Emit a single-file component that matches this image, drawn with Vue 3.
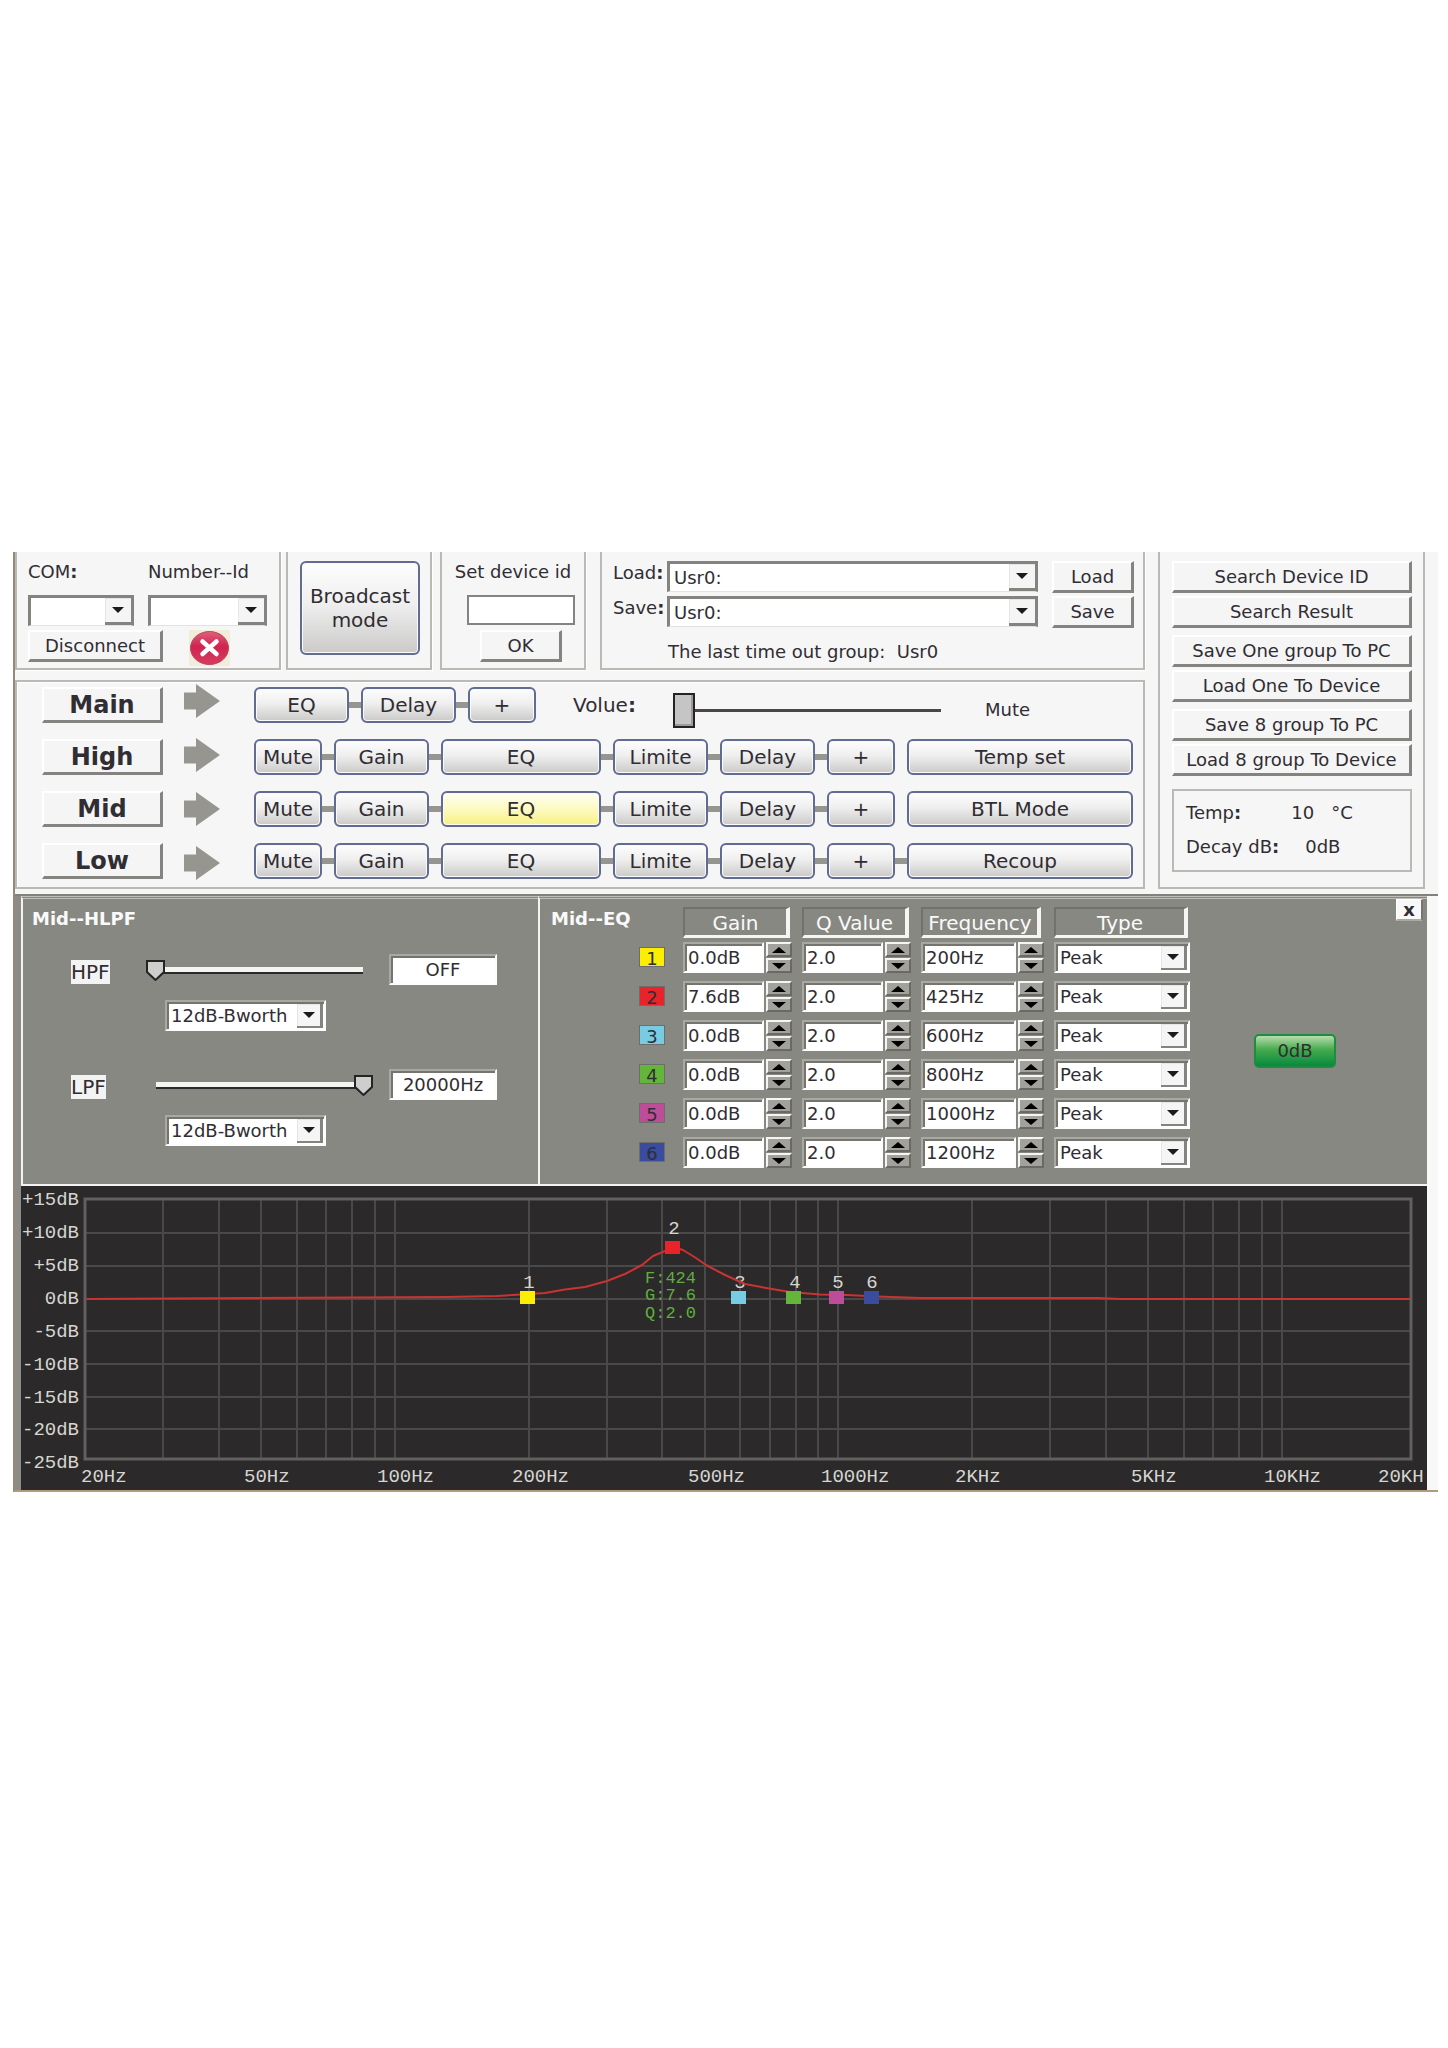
<script setup>
import { ref } from 'vue'

const channels = [
  { name: 'High', last: 'Temp set', linked: false, active: false },
  { name: 'Mid', last: 'BTL Mode', linked: false, active: true },
  { name: 'Low', last: 'Recoup', linked: true, active: false },
]
const names = ['Main', 'High', 'Mid', 'Low']

const actions = [
  ['Search Device ID', 'Search Result'],
  ['Save One group To PC', 'Load One To Device'],
  ['Save 8 group To PC', 'Load 8 group To Device'],
]

const volume = ref(0)
const filters = ref([
  { id: 'hpf', name: 'HPF', pos: 0, value: 'OFF' },
  { id: 'lpf', name: 'LPF', pos: 100, value: '20000Hz' },
])

const bands = ref([
  { n: 1, color: '#fbee00', gain: '0.0dB', q: '2.0', freq: '200Hz', x: 499, y: 105, tx: 508, ty: 102 },
  { n: 2, color: '#e8242a', gain: '7.6dB', q: '2.0', freq: '425Hz', x: 644, y: 55, tx: 653, ty: 48 },
  { n: 3, color: '#77cbe2', gain: '0.0dB', q: '2.0', freq: '600Hz', x: 710, y: 105, tx: 719, ty: 102 },
  { n: 4, color: '#63b63a', gain: '0.0dB', q: '2.0', freq: '800Hz', x: 765, y: 105, tx: 774, ty: 102 },
  { n: 5, color: '#bd4d99', gain: '0.0dB', q: '2.0', freq: '1000Hz', x: 808, y: 105, tx: 817, ty: 102 },
  { n: 6, color: '#394c9f', gain: '0.0dB', q: '2.0', freq: '1200Hz', x: 843, y: 105, tx: 851, ty: 102 },
])
const fields = [
  { key: 'gain', label: 'Gain' },
  { key: 'q', label: 'Q value' },
  { key: 'freq', label: 'Frequency' },
]

// Logarithmic frequency axis, 20 Hz to 20 kHz
const fx = (f) => Math.round(64 + 443.5 * Math.log10(f / 20))
const gridX = []
for (const d of [10, 100, 1000]) {
  for (let i = 1; i < 10; i++) if (d * i > 20) gridX.push(fx(d * i))
}
gridX.push(fx(10000))
const gridY = [47, 80, 113, 145, 178, 211, 243]
const dbLabels = [
  { t: '+15dB', y: 19 },
  { t: '+10dB', y: 52 },
  { t: '+5dB', y: 85 },
  { t: '0dB', y: 118 },
  { t: '-5dB', y: 151 },
  { t: '-10dB', y: 184 },
  { t: '-15dB', y: 217 },
  { t: '-20dB', y: 249 },
  { t: '-25dB', y: 282 },
]
const hzLabels = [
  { t: '20Hz', x: 60 },
  { t: '50Hz', x: 223 },
  { t: '100Hz', x: 356 },
  { t: '200Hz', x: 491 },
  { t: '500Hz', x: 667 },
  { t: '1000Hz', x: 800 },
  { t: '2KHz', x: 934 },
  { t: '5KHz', x: 1110 },
  { t: '10KHz', x: 1243 },
  { t: '20KH', x: 1357 },
]
</script>

<template>
  <main class="page">
    <div class="app">
      <header class="top">
        <div class="top-left">
          <div class="boxes">
            <section class="box com">
              <label for="com">COM<b>:</b></label>
              <label for="num">Number--Id</label>
              <div class="combo com-combo"><select id="com"><option></option></select><i></i></div>
              <div class="combo"><select id="num"><option></option></select><i></i></div>
              <button class="raised">Disconnect</button>
              <svg class="status" viewBox="0 0 41 36" role="img" aria-label="Disconnected">
                <defs>
                  <linearGradient id="red" x1="0" y1="0" x2="0" y2="1">
                    <stop offset="0" stop-color="#e0607c" />
                    <stop offset=".45" stop-color="#cf2450" />
                    <stop offset="1" stop-color="#d63c60" />
                  </linearGradient>
                </defs>
                <rect width="41" height="36" fill="#f1edda" />
                <ellipse cx="20.500" cy="18" rx="19" ry="16.500" fill="url(#red)" stroke="#b9475c" />
                <path d="M13.500 11.500L27.500 24M27.500 11.500L13.500 24" stroke="#fff" stroke-width="4.500" stroke-linecap="round" />
              </svg>
            </section>

            <section class="box cast">
              <button class="glossy big">Broadcast mode</button>
            </section>

            <section class="box device">
              <label for="dev">Set device id</label>
              <input id="dev" type="text" />
              <button class="raised">OK</button>
            </section>

            <section class="box presets">
              <label for="load">Load<b>:</b></label>
              <div class="combo"><select id="load"><option>Usr0:</option></select><i></i></div>
              <button class="raised">Load</button>
              <label for="save">Save<b>:</b></label>
              <div class="combo"><select id="save"><option>Usr0:</option></select><i></i></div>
              <button class="raised">Save</button>
              <p>The last time out group:&nbsp; Usr0</p>
            </section>
          </div>

          <section class="channels">
            <div class="names">
              <button v-for="n in names" :key="n" class="raised name">{{ n }}</button>
            </div>
            <div class="arrows">
              <svg v-for="n in names" :key="n" viewBox="0 0 36 34"><path d="M0 8.500H12V0L36 17L12 34V25.500H0Z" fill="#96958f" /></svg>
            </div>
            <div class="strips">
              <div class="strip main-strip">
                <button class="glossy w95 link">EQ</button>
                <button class="glossy w95 link">Delay</button>
                <button class="glossy w68">+</button>
                <label for="vol">Volue<b>:</b></label>
                <input id="vol" v-model="volume" class="vol" type="range" min="0" max="100" />
                <output for="vol">Mute</output>
              </div>
              <div v-for="c in channels" :key="c.name" class="strip">
                <button class="glossy w68 link">Mute</button>
                <button class="glossy w95 link">Gain</button>
                <button class="glossy w160 link" :class="{ active: c.active }">EQ</button>
                <button class="glossy w95 link">Limite</button>
                <button class="glossy w95 link">Delay</button>
                <button class="glossy w68" :class="{ link: c.linked }">+</button>
                <button class="glossy wide">{{ c.last }}</button>
              </div>
            </div>
          </section>
        </div>

        <aside class="side">
          <div v-for="(pair, i) in actions" :key="i" class="pair">
            <button v-for="a in pair" :key="a" class="raised">{{ a }}</button>
          </div>
          <dl class="readings">
            <dt>Temp<b>:</b></dt>
            <dd class="temp"><span>10</span><span>°C</span></dd>
            <dt>Decay dB<b>:</b></dt>
            <dd class="decay">0dB</dd>
          </dl>
        </aside>
      </header>

      <div class="body">
        <div class="panels">
          <section class="panel hlpf">
            <h2>Mid--HLPF</h2>
            <div v-for="f in filters" :key="f.id" class="filter">
              <div class="filter-row">
                <label :for="f.id"><span>{{ f.name }}</span></label>
                <input :id="f.id" v-model="f.pos" class="cut" type="range" min="0" max="100" />
                <input v-model="f.value" class="sunk value" type="text" :aria-label="f.name + ' frequency'" />
              </div>
              <div class="combo sunk slope">
                <select :aria-label="f.name + ' slope'"><option>12dB-Bworth</option></select><i></i>
              </div>
            </div>
          </section>

          <section class="panel eq">
            <h2>Mid--EQ</h2>
            <div class="bands">
              <div class="band head">
                <span></span><span class="th">Gain</span><span class="th">Q Value</span><span class="th fr">Frequency</span><span class="th ty">Type</span>
              </div>
              <div v-for="b in bands" :key="b.n" class="band">
                <span class="swatch" :style="{ background: b.color }">{{ b.n }}</span>
                <div v-for="f in fields" :key="f.key" class="spin">
                  <input v-model="b[f.key]" class="sunk" type="text" :aria-label="f.label + ' of band ' + b.n" />
                  <div class="steps">
                    <button :aria-label="f.label + ' up'"><svg viewBox="0 0 14 6"><path d="M0 6L7 0L14 6Z" /></svg></button>
                    <button :aria-label="f.label + ' down'"><svg viewBox="0 0 14 6"><path d="M0 0H14L7 6Z" /></svg></button>
                  </div>
                </div>
                <div class="combo sunk">
                  <select :aria-label="'Type of band ' + b.n"><option>Peak</option></select><i></i>
                </div>
              </div>
            </div>
            <button class="zero">0dB</button>
            <button class="close" aria-label="Close">x</button>
          </section>
        </div>

        <svg class="chart" viewBox="0 0 1406 304" role="img" aria-label="Frequency response">
          <rect width="1406" height="304" fill="#2b2929" />
          <g stroke="#4a4949" stroke-width="2">
            <line v-for="x in gridX" :key="'x' + x" :x1="x" :x2="x" y1="13" y2="273" />
            <line v-for="y in gridY" :key="'y' + y" x1="64" x2="1390" :y1="y" :y2="y" />
          </g>
          <rect x="64" y="13" width="1326" height="260" fill="none" stroke="#62615f" stroke-width="3" />
          <g class="axis">
            <text v-for="l in dbLabels" :key="l.t" x="58" :y="l.y" text-anchor="end">{{ l.t }}</text>
            <text v-for="l in hzLabels" :key="l.t" :x="l.x" y="296">{{ l.t }}</text>
            <text v-for="b in bands" :key="b.n" :x="b.tx" :y="b.ty" text-anchor="middle">{{ b.n }}</text>
          </g>
          <path
            d="M66 113L232 112L426 111L476 110L500 108.500L524 107L544 103.500L564 101L586 95L604 88L621 79L632 70L644 65L652 61L662 64L675 72L685 79L704 89L724 98L751 103L769 106L799 108.500L826 109L856 110.500L900 112H1077L1100 113H1389"
            fill="none" stroke="#c83431" stroke-width="2" stroke-linejoin="round"
          />
          <rect v-for="b in bands" :key="b.n" :x="b.x" :y="b.y" width="15" height="13" :fill="b.color" />
          <g class="readout">
            <text x="624" y="97">F:424</text>
            <text x="624" y="114">G:7.6</text>
            <text x="624" y="132">Q:2.0</text>
          </g>
        </svg>
      </div>
    </div>
  </main>
</template>

<style>
body {
  margin: 0;
  background: #fff;
}
</style>

<style scoped>
* {
  box-sizing: border-box;
}
.page {
  min-height: 100vh;
  display: flex;
  align-items: center;
  padding: 0 10px 4px 13px;
  font: 18px/24px "DejaVu Sans", Verdana, sans-serif;
  color: #302d33;
}
button,
input,
select,
output {
  font: inherit;
  color: inherit;
  margin: 0;
  padding: 0;
}
.app {
  flex: 1;
  min-width: 0;
  border-left: 2px solid #96897c;
  border-bottom: 2px solid #b39a7c;
}
.top {
  display: flex;
  gap: 13px;
  padding: 0 13px 5px 0;
  background: #f6f6f6;
  border-bottom: 2px solid #83817b;
}
.top-left {
  flex: 1;
  min-width: 0;
}
.boxes {
  display: flex;
  height: 118px;
  margin-bottom: 10px;
}
.box {
  border: 2px solid #bbb9b4;
  border-top: 0;
  box-shadow: 1px 1px #fff;
}

/* classic raised push button */
.raised {
  height: 32px;
  background: #f5f5f5;
  border: 2px solid #fff;
  border-right: 3px solid #85837f;
  border-bottom: 3px solid #85837f;
  white-space: nowrap;
}
.glossy {
  position: relative;
  height: 36px;
  flex: none;
  font-size: 20px;
  border: 2px solid #626b92;
  border-radius: 6px;
  background: linear-gradient(#fdfdfd, #efefef 45%, #cbcac9);
  box-shadow: inset 0 0 0 1px #fafafa;
}
.glossy.active {
  background: linear-gradient(#fffff4, #fcf9bb 55%, #f8f183);
}
.link::after {
  content: "";
  position: absolute;
  left: calc(100% + 2px);
  top: 13px;
  width: 12px;
  height: 6px;
  background: #96958f;
}

/* drop-down */
.combo {
  position: relative;
  height: 31px;
  background: #fff;
  border: 3px solid #85837f;
  border-bottom: 1px solid #e2e2e2;
}
.combo select {
  display: block;
  width: 100%;
  height: 100%;
  padding-left: 4px;
  border: 0;
  background: transparent;
  appearance: none;
  outline: 0;
}
.combo i {
  position: absolute;
  top: 0;
  right: 0;
  bottom: 0;
  width: 26px;
  background: #f5f5f5;
  border: solid #85837f;
  border-width: 0 0 3px;
  box-shadow: inset 1px 1px #e6e6e6;
  pointer-events: none;
}
.combo i::after {
  content: "";
  position: absolute;
  left: 7px;
  top: 9px;
  border: solid transparent;
  border-width: 6px 6px 0;
  border-top-color: #1c1a1a;
}

.com {
  width: 266px;
  display: grid;
  grid-template-columns: 106px 119px;
  grid-template-rows: 43px 31px 32px;
  column-gap: 14px;
  row-gap: 0;
  padding-left: 11px;
}
.com label {
  padding-top: 8px;
}
.com .raised {
  width: 135px;
  margin-top: 4px;
}
.status {
  width: 41px;
  height: 36px;
  margin: 4px 0 0 41px;
}
.cast {
  width: 146px;
  margin-left: 5px;
  padding: 9px 10px 9px 12px;
}
.big {
  width: 100%;
  height: 94px;
  line-height: 24px;
}
.device {
  width: 146px;
  margin-left: 8px;
  display: flex;
  flex-direction: column;
  align-items: center;
  padding-top: 8px;
}
.device label {
  white-space: nowrap;
}
.device input {
  width: 108px;
  height: 30px;
  flex: none;
  margin: 11px 0 5px 16px;
  background: #fff;
  border: 2px solid #85837f;
}
.device .raised {
  width: 82px;
  margin-left: 16px;
}
.presets {
  flex: 1;
  margin-left: 14px;
  display: grid;
  grid-template-columns: 54px 1fr 82px;
  grid-template-rows: 32px 32px auto;
  row-gap: 3px;
  align-content: start;
  padding: 9px 9px 0 11px;
}
.presets .combo {
  margin-right: 14px;
}
.presets p {
  grid-column: 2 / 4;
  margin: 9px 0 0 1px;
}

.channels {
  display: flex;
  height: 209px;
  border: 2px solid #bbb9b4;
  padding: 5px 10px 0 25px;
  box-shadow: inset 1px 1px #fff;
}
.names {
  display: flex;
  flex-direction: column;
  gap: 16px;
}
.name {
  width: 121px;
  height: 36px;
  font-size: 24px;
  font-weight: bold;
}
.arrows {
  display: flex;
  flex-direction: column;
  gap: 20px;
  margin: -3px 34px 0 21px;
}
.arrows svg {
  width: 36px;
  height: 34px;
}
.strips {
  flex: 1;
  min-width: 0;
  display: flex;
  flex-direction: column;
  gap: 16px;
}
.strip {
  display: flex;
  align-items: center;
  gap: 12px;
}
.w68 {
  width: 68px;
}
.w95 {
  width: 95px;
}
.w160 {
  width: 160px;
}
.wide {
  flex: 1;
}
.main-strip label {
  width: 88px;
  margin-left: 25px;
  font-size: 20px;
}
.vol {
  appearance: none;
  width: 268px;
  height: 36px;
  margin: 5px 0 -5px;
  background: linear-gradient(#4a4646, #4a4646) center / 100% 3px no-repeat;
}
.vol::-webkit-slider-thumb {
  appearance: none;
  width: 22px;
  height: 35px;
  background: #c6c5c5;
  border: 2px solid #252323;
  box-shadow: inset -2px -2px #9d9b9b;
}
.main-strip output {
  margin-left: 32px;
  padding-top: 9px;
}

.side {
  width: 267px;
  border: 2px solid #bbb9b4;
  border-top: 0;
  padding: 9px 11px 0 12px;
}
.pair {
  display: flex;
  flex-direction: column;
  gap: 3px;
  margin-bottom: 7px;
}
.side .raised {
  width: 100%;
}
.readings {
  display: grid;
  grid-template-columns: auto 1fr;
  align-content: start;
  row-gap: 10px;
  height: 83px;
  margin: 13px 0 0;
  padding: 10px 12px;
  border: 2px solid #bbb9b4;
}
.readings dd {
  margin: 0;
}
.temp {
  display: flex;
  gap: 17px;
  padding-left: 12px;
}
.decay {
  padding-left: 26px;
}

.body {
  border-left: 6px solid #8c8b86;
  border-right: 11px solid #f8f8f8;
}
.panels {
  display: flex;
  background: #888883;
}
.panel {
  height: 290px;
  border: 2px solid #f3f3f1;
  border-top: 3px double #bfbeb8;
  border-right: 0;
}
.panel h2 {
  margin: 0;
  font-size: 18px;
  line-height: 24px;
  color: #fafafa;
}
.hlpf {
  width: 517px;
  flex: none;
  padding: 8px 40px 0 9px;
}
.filter {
  margin: 23px 0 38px 39px;
}
.filter + .filter {
  margin-top: 0;
}
.filter-row {
  display: flex;
  height: 30px;
  margin-bottom: 16px;
}
.filter-row label {
  width: 75px;
  padding-top: 6px;
  font-size: 20px;
}
.filter-row label span {
  display: inline-block;
  background: #f3f3f3;
  color: #302d33;
}
.cut {
  appearance: none;
  width: 227px;
  height: 32px;
  background: linear-gradient(#f4f4f2 5px, #2b2929 5px) center / calc(100% - 20px) 7px no-repeat;
}
.cut::-webkit-slider-thumb {
  appearance: none;
  width: 19px;
  height: 21px;
  background: url("data:image/svg+xml,%3Csvg xmlns='http://www.w3.org/2000/svg' viewBox='0 0 19 21'%3E%3Cpath d='M1 1H18V12L9.500 20L1 12Z' fill='%23cfcece' stroke='%23252323' stroke-width='2'/%3E%3C/svg%3E");
}

/* field sunk into the grey panel */
.sunk {
  height: 31px;
  background: #fff;
  border: 2px solid #fdfdfd;
  border-top-color: #a9a8a3;
  border-left-color: #a9a8a3;
  box-shadow: inset 2px 2px #76746f;
  outline: 0;
}
.value {
  width: 108px;
  margin-left: 16px;
  text-align: center;
}
.slope {
  width: 161px;
  margin-left: 94px;
}
.combo.sunk i {
  top: 2px;
  right: 1px;
  bottom: 1px;
  border-width: 0 3px 2px 0;
}
.combo.sunk i::after {
  left: 6px;
  top: 8px;
}

.eq {
  flex: 1;
  min-width: 0;
  display: flex;
  align-items: flex-start;
  padding-left: 11px;
}
.eq h2 {
  flex: 0 0 88px;
  margin-top: 8px;
  white-space: nowrap;
}
.bands {
  display: flex;
  flex-direction: column;
  gap: 8px;
  padding-top: 8px;
}
.band {
  display: grid;
  grid-template-columns: 34px 109px 109px 123px 136px;
  column-gap: 10px;
  align-items: center;
}
.head {
  margin-bottom: -4px;
}
.th {
  width: 107px;
  height: 31px;
  text-align: center;
  font-size: 20px;
  line-height: 28px;
  color: #fafafa;
  border: 3px solid #f5f5f3;
  border-width: 2px 4px 3px 2px;
  border-top-color: #73716c;
  border-left-color: #73716c;
}
.th.fr {
  width: 120px;
}
.th.ty {
  width: 134px;
}
.swatch {
  width: 26px;
  height: 20px;
  margin-top: -2px;
  line-height: 21px;
  text-align: center;
  border: 1px solid #6f6d69;
}
.spin {
  display: flex;
  gap: 2px;
}
.spin input {
  flex: 1;
  min-width: 0;
  padding-left: 3px;
}
.steps {
  display: flex;
  flex-direction: column;
  gap: 1px;
}
.steps button {
  display: flex;
  align-items: center;
  justify-content: center;
  width: 26px;
  height: 15px;
  background: #a2a19c;
  border: 2px solid #f5f5f3;
  border-right-color: #6b6964;
  border-bottom-color: #6b6964;
}
.steps svg {
  width: 14px;
  height: 6px;
}
.zero {
  width: 82px;
  height: 34px;
  margin: 135px 0 0 64px;
  border: 2px solid #208c40;
  border-radius: 5px;
  background: linear-gradient(#b7dcae, #45ab4c 45%, #078a41);
}
.close {
  width: 27px;
  height: 22px;
  margin: 0 4px 0 auto;
  line-height: 16px;
  font-weight: bold;
  background: #f8f8f8;
  border: 1px solid #fff;
  border-right: 2px solid #77756f;
  border-bottom: 2px solid #a9a8a3;
}

.chart {
  display: block;
  width: 100%;
}
.axis text {
  font: 19px "Liberation Mono", monospace;
  fill: #d6d5d2;
}
.readout text {
  font: 17px "Liberation Mono", monospace;
  fill: #5fae3f;
}
</style>
